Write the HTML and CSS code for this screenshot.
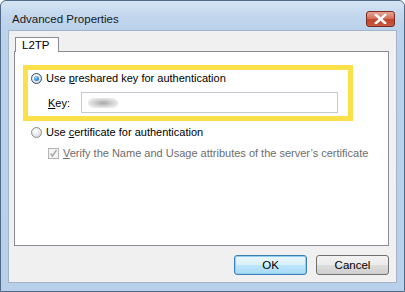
FILE: index.html
```html
<!DOCTYPE html>
<html>
<head>
<meta charset="utf-8">
<link rel="stylesheet" href="styles.css">
</head>
<body>
<div class="window">
  <div class="titlebar">
    <span class="title">Advanced Properties</span>
    <span class="close"><svg width="13" height="10" viewBox="0 0 13 10"><path d="M2 1 L11 9 M11 1 L2 9" stroke="#fff" stroke-width="2.6" stroke-linecap="square"/></svg></span>
  </div>
  <div class="client">
    <div class="tabs">
      <div class="tab">L2TP</div>
    </div>
    <div class="panel">
      <div class="highlight">
        <div class="row">
          <span class="radio checked"><span class="dot"></span></span>
          <span class="label">Use <u>p</u>reshared key for authentication</span>
        </div>
        <div class="keyrow">
          <span class="keylabel"><u>K</u>ey:</span>
          <span class="input"><span class="blur"></span></span>
        </div>
      </div>
      <div class="row row2">
        <span class="radio"></span>
        <span class="label">Use <u>c</u>ertificate for authentication</span>
      </div>
      <div class="row row3">
        <span class="check"><svg width="9" height="9" viewBox="0 0 9 9"><path d="M1.5 4.5 L3.5 7 L7.5 1" fill="none" stroke="#a8a8a8" stroke-width="1.4"/></svg></span>
        <span class="label disabled"><u>V</u>erify the Name and Usage attributes of the server’s certificate</span>
      </div>
    </div>
    <div class="buttons">
      <span class="btn default">OK</span>
      <span class="btn">Cancel</span>
    </div>
  </div>
</div>
</body>
</html>
```
FILE: styles.css
```css
html, body {
  margin: 0;
  padding: 0;
  background: #ffffff;
}
body {
  font-family: "Liberation Sans", "DejaVu Sans", sans-serif;
  font-size: 11px;
  color: #000;
}
.window {
  width: 405px;
  height: 292px;
  box-sizing: border-box;
  border: 1px solid #4f6a86;
  background: linear-gradient(180deg, #c3d8ee 0%, #b9d1ea 15%, #b8d0ea 100%);
  display: flex;
  flex-direction: column;
  border-radius: 6px 6px 0 0;
}
.titlebar {
  height: 29px;
  display: flex;
  align-items: center;
  padding: 0 9px 0 11px;
  background: linear-gradient(180deg, #d6e5f4 0%, #c2d7ed 50%, #b9d1ea 100%);
  border-radius: 6px 6px 0 0;
}
.title {
  flex: 1;
  color: #1a1a1a;
  font-size: 11.5px;
  padding-top: 6px;
}
.close {
  width: 29px;
  height: 16px;
  margin-top: 6px;
  box-sizing: border-box;
  border: 1px solid #7a2a22;
  border-radius: 3px;
  background: linear-gradient(180deg, #e8a493 0%, #d3735f 45%, #c0442d 55%, #c95a3f 100%);
  display: flex;
  align-items: center;
  justify-content: center;
}
.client {
  flex: 1;
  margin: 0 7px 8px 7px;
  background: #f0f0f0;
  border: 1px solid #a3b4c8;
  display: flex;
  flex-direction: column;
  padding: 6px 7px 0 5px;
}
.tabs {
  display: flex;
  height: 14px;
}
.tab {
  width: 44px;
  height: 15px;
  margin-left: 1px;
  box-sizing: border-box;
  border: 1px solid #898c95;
  border-bottom: none;
  background: #fff;
  padding: 1px 0 0 6px;
  line-height: 13px;
  position: relative;
  z-index: 1;
  font-size: 11.5px;
}
.panel {
  height: 195px;
  box-sizing: border-box;
  border: 1px solid #898c95;
  background: #fff;
  padding: 13px 0 0 8px;
}
.highlight {
  width: 330px;
  height: 56px;
  box-sizing: border-box;
  border: 5px solid #fbe04a;
  padding: 0 0 0 3px;
}
.row {
  display: flex;
  align-items: center;
  height: 16px;
}
.label {
  margin-left: 4px;
  white-space: nowrap;
}
.label.disabled {
  color: #6d6d6d;
}
.radio {
  width: 11px;
  height: 11px;
  box-sizing: border-box;
  border-radius: 50%;
  border: 1px solid #8c8c8c;
  background: radial-gradient(circle at 40% 35%, #ffffff 0%, #e6e6e6 55%, #c9c9c9 100%);
  display: flex;
  align-items: center;
  justify-content: center;
}
.radio.checked {
  border-color: #2c4a6e;
}
.dot {
  width: 5px;
  height: 5px;
  border-radius: 50%;
  background: radial-gradient(circle at 40% 35%, #9fd8ff 0%, #2f8fd8 55%, #164c8c 100%);
}
.keyrow {
  display: flex;
  align-items: center;
  margin-top: 6px;
  padding-left: 17px;
  height: 21px;
}
.keylabel {
  width: 33px;
}
.input {
  width: 257px;
  height: 21px;
  box-sizing: border-box;
  border: 1px solid #c4c8cf;
  background: #fff;
  display: flex;
  align-items: center;
  padding-left: 6px;
}
.blur {
  width: 30px;
  height: 10px;
  border-radius: 5px;
  background: radial-gradient(ellipse at 50% 50%, #a8a8a8 0%, #d8d8d8 50%, #ffffff 100%);
}
.row2 {
  margin: 3px 0 0 8px;
}
.row3 {
  margin: 5px 0 0 25px;
}
.check {
  width: 11px;
  height: 11px;
  box-sizing: border-box;
  border: 1px solid #b4b4b4;
  background: #f4f4f4;
  display: flex;
  align-items: center;
  justify-content: center;
}
.buttons {
  display: flex;
  justify-content: flex-end;
  gap: 9px;
  margin-top: 9px;
}
.btn {
  width: 73px;
  height: 20px;
  box-sizing: border-box;
  border: 1px solid #707070;
  border-radius: 3px;
  background: linear-gradient(180deg, #f2f2f2 0%, #ebebeb 50%, #dddddd 51%, #cfcfcf 100%);
  display: flex;
  align-items: center;
  justify-content: center;
  font-size: 11.5px;
}
.btn.default {
  border-color: #3c7fb1;
  background: linear-gradient(180deg, #eaf6fd 0%, #d9f0fc 50%, #bee6fd 51%, #a7d9f5 100%);
  box-shadow: inset 0 0 0 1px #8fd0f3;
}
u {
  text-decoration: underline;
  text-underline-offset: 1px;
}
```
